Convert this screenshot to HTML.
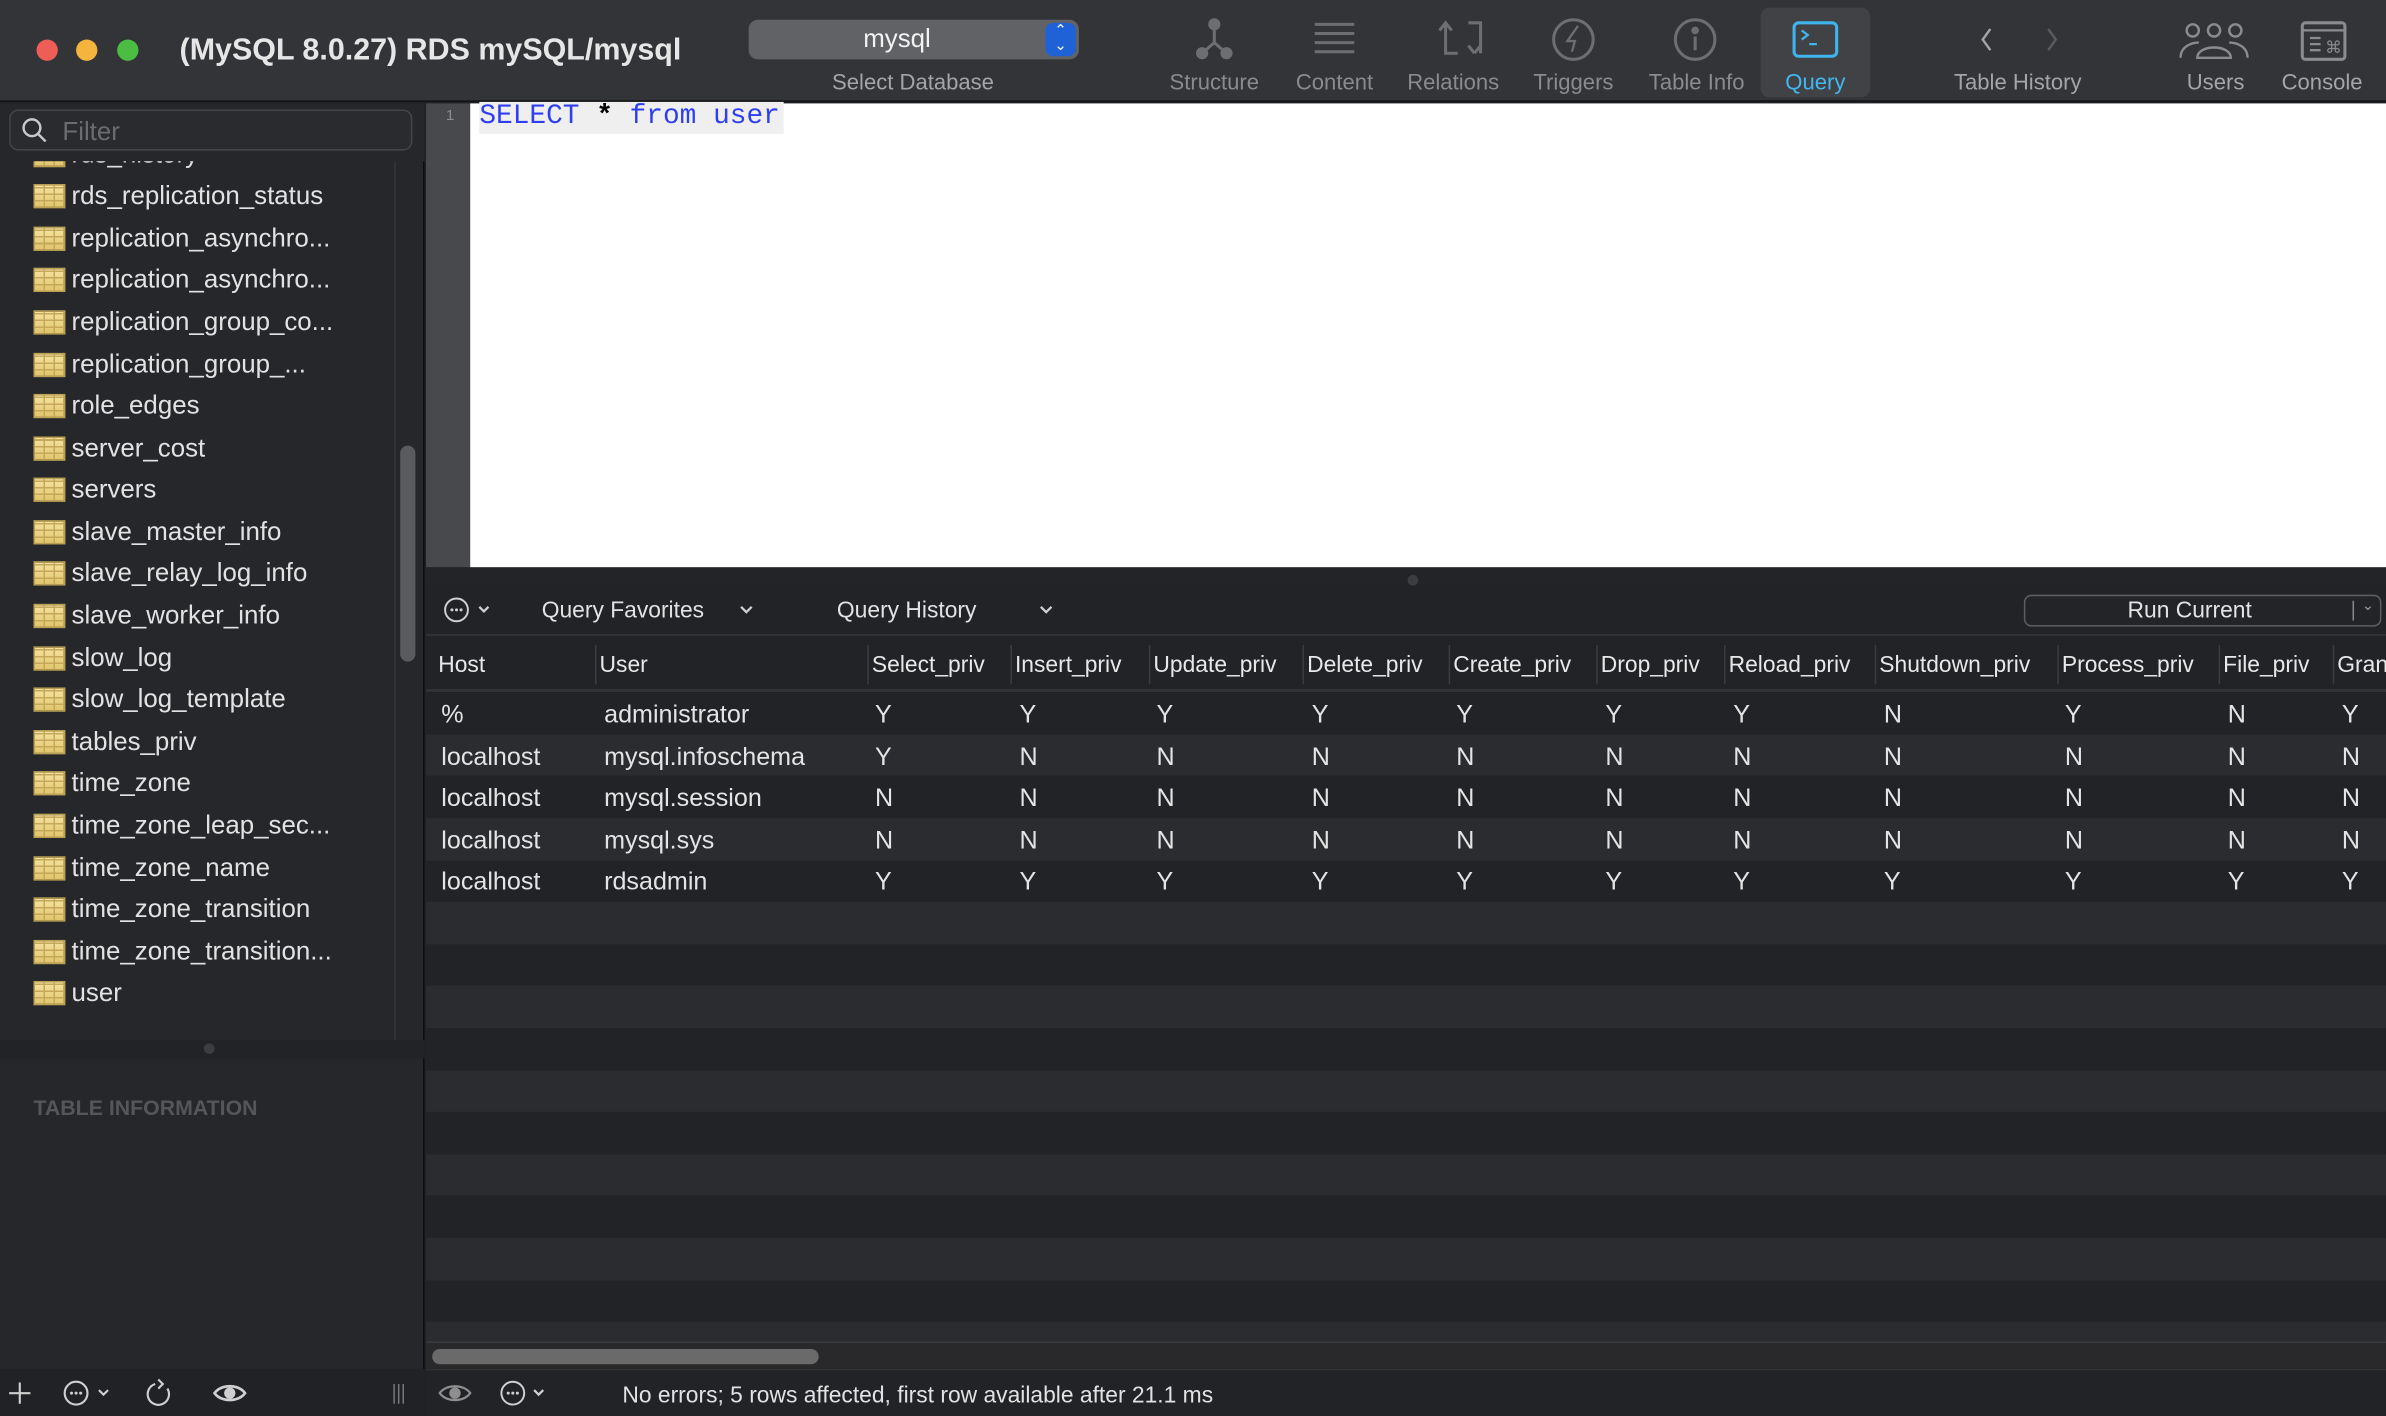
<!DOCTYPE html>
<html><head><meta charset="utf-8"><style>
*{margin:0;padding:0;box-sizing:border-box}
html,body{width:2386px;height:1416px;overflow:hidden;background:#1f2023}
#w{position:absolute;left:0;top:0;width:1568px;height:931px;transform:scale(1.52168,1.5209);transform-origin:0 0;font-family:"Liberation Sans",sans-serif;color:#ddd;background:#212327;overflow:hidden}
.a{position:absolute}
.tb{left:0;top:0;width:1568px;height:67px;background:#333438;border-bottom:1px solid #111}
.tl{width:14px;height:14px;border-radius:7px;top:26px}
.tlab{font-size:14.5px;color:#8a8b8e;text-align:center;top:47px}
.side{left:0;top:68px;width:279px;height:863px;background:#26272b;border-right:1px solid #0c0c0d}
.it{left:22px;height:27px;font-size:17px;color:#e2e2e2;white-space:nowrap;display:flex;align-items:center}
.ic{width:21px;height:16px;margin-right:4px;background:linear-gradient(#f4e3a0,#e0c56c);border:1px solid #b9a052;position:relative}
.ic:before{content:"";position:absolute;inset:0;background:repeating-linear-gradient(0deg,transparent 0 3.4px,#c5a85a 3.4px 4.4px),repeating-linear-gradient(90deg,transparent 0 5.5px,#c5a85a 5.5px 6.5px)}
.hd{font-size:15px;color:#e8e8e8;top:429px}
.sep{width:1px;height:26px;background:#3a3c40;top:424px}
.row{left:280px;width:1288px;height:27.6px}
.c{font-size:16.5px;color:#e4e4e4}
</style></head><body><div id="w">
<div class="a tb"></div>
<div class="a tl" style="left:24px;background:#ee5e57"></div>
<div class="a tl" style="left:50px;background:#f4b43d"></div>
<div class="a tl" style="left:77px;background:#4bbd43"></div>
<div class="a" style="left:118px;top:22px;font-size:20px;font-weight:bold;color:#e6e6e6">(MySQL 8.0.27) RDS mySQL/mysql</div>
<div class="a" style="left:492px;top:13px;width:217px;height:26px;background:#616266;border-radius:6px"></div>
<div class="a" style="left:492px;top:16px;width:195px;text-align:center;font-size:17px;color:#f2f2f2">mysql</div>
<div class="a" style="left:687px;top:15px;width:20px;height:22px;background:#1f62d8;border-radius:5px;color:#fff;font-size:10px;text-align:center;line-height:10px;padding-top:1px">&#8963;<br>&#8964;</div>
<div class="a tlab" style="left:520px;width:160px;color:#a4a5a8">Select Database</div>
<div class="a" style="left:1157px;top:5px;width:72px;height:59px;background:#414246;border-radius:6px"></div>
<svg class="a" style="left:760px;top:8px" width="800" height="34" fill="none" stroke="#6d6e71" stroke-width="2">
<g fill="#6d6e71" stroke="none"><circle cx="38" cy="8" r="4"/><circle cx="30" cy="27" r="4"/><circle cx="46" cy="27" r="4"/></g><path d="M38 8v12l-8 7M38 20l8 7"/>
<path d="M104 8h26M104 14h26M104 20h26M104 26h26"/>
<path d="M186 12l4-5 4 5M190 7v20h8M205 7h8v20M209 27l-4-5M209 27l4-5"/>
<circle cx="274" cy="18" r="13"/><path d="M277 9l-7 10h5l-2 7" stroke-width="1.5"/>
<circle cx="354" cy="18" r="13"/><circle cx="354" cy="12" r="1.5" fill="#6d6e71"/><path d="M354 16v9"/>
<rect x="419" y="7" width="28" height="22" rx="3" stroke="#3fb5f0"/><path d="M424 12l4 3-4 3M429 21h5" stroke="#3fb5f0" stroke-width="1.5"/>
<path d="M548 11l-5 7 5 7" stroke="#a3a4a6" stroke-width="1.6"/><path d="M586 11l5 7-5 7" stroke="#5a5b5e" stroke-width="1.6"/>
<g stroke="#8a8b8e" stroke-width="1.6"><circle cx="681" cy="12" r="4"/><circle cx="695" cy="12" r="4"/><circle cx="709" cy="12" r="4"/><path d="M673 30c0-8 8-10 12-10M717 30c0-8-8-10-12-10M684 30c0-9 22-9 22 0z"/></g>
<rect x="753" y="7" width="28" height="24" rx="2" stroke="#8a8b8e"/><path d="M753 12h28M758 17h7M758 21h7M758 25h7" stroke="#8a8b8e" stroke-width="1.5"/><text x="768" y="27" font-size="11" fill="#8a8b8e" stroke="none" font-family="DejaVu Sans">&#8984;</text>
</svg>
<div class="a tlab" style="left:758px;width:80px">Structure</div>
<div class="a tlab" style="left:844px;width:66px">Content</div>
<div class="a tlab" style="left:920px;width:70px">Relations</div>
<div class="a tlab" style="left:1000px;width:68px">Triggers</div>
<div class="a tlab" style="left:1078px;width:74px">Table Info</div>
<div class="a tlab" style="left:1157px;width:72px;color:#41b6f0">Query</div>
<div class="a tlab" style="left:1270px;width:112px;color:#a4a5a8">Table History</div>
<div class="a tlab" style="left:1426px;width:60px;color:#a4a5a8">Users</div>
<div class="a tlab" style="left:1494px;width:64px;color:#a4a5a8">Console</div>

<div class="a side"></div>
<div class="a" style="left:0;top:68px;width:279px;height:38px;background:#26272b;z-index:2"></div>
<div class="a" style="left:6px;top:72px;width:265px;height:27px;border:1px solid #444549;border-radius:6px;background:#2a2b2f;z-index:3"></div>
<svg class="a" style="left:14px;top:77px;z-index:4" width="18" height="18" fill="none" stroke="#c8c8c8" stroke-width="1.6"><circle cx="7" cy="7" r="5.5"/><path d="M11 11l5 5"/></svg>
<div class="a" style="left:41px;top:77px;font-size:17px;color:#6b6c70;z-index:4">Filter</div>
<div class="a" style="left:259px;top:106px;width:1px;height:578px;background:#36373b"></div>
<div class="a" style="left:263px;top:293px;width:10px;height:142px;background:#5a5b5e;border-radius:5px"></div>
<div class="a it" style="top:88px"><span class="ic"></span>rds_history</div>
<div class="a it" style="top:115px"><span class="ic"></span>rds_replication_status</div>
<div class="a it" style="top:143px"><span class="ic"></span>replication_asynchro...</div>
<div class="a it" style="top:170px"><span class="ic"></span>replication_asynchro...</div>
<div class="a it" style="top:198px"><span class="ic"></span>replication_group_co...</div>
<div class="a it" style="top:226px"><span class="ic"></span>replication_group_...</div>
<div class="a it" style="top:253px"><span class="ic"></span>role_edges</div>
<div class="a it" style="top:281px"><span class="ic"></span>server_cost</div>
<div class="a it" style="top:308px"><span class="ic"></span>servers</div>
<div class="a it" style="top:336px"><span class="ic"></span>slave_master_info</div>
<div class="a it" style="top:363px"><span class="ic"></span>slave_relay_log_info</div>
<div class="a it" style="top:391px"><span class="ic"></span>slave_worker_info</div>
<div class="a it" style="top:419px"><span class="ic"></span>slow_log</div>
<div class="a it" style="top:446px"><span class="ic"></span>slow_log_template</div>
<div class="a it" style="top:474px"><span class="ic"></span>tables_priv</div>
<div class="a it" style="top:501px"><span class="ic"></span>time_zone</div>
<div class="a it" style="top:529px"><span class="ic"></span>time_zone_leap_sec...</div>
<div class="a it" style="top:557px"><span class="ic"></span>time_zone_name</div>
<div class="a it" style="top:584px"><span class="ic"></span>time_zone_transition</div>
<div class="a it" style="top:612px"><span class="ic"></span>time_zone_transition...</div>
<div class="a it" style="top:639px"><span class="ic"></span>user</div>
<div class="a" style="left:0;top:684px;width:279px;height:12px;background:#222327"></div>
<div class="a" style="left:134px;top:686px;width:7px;height:7px;border-radius:4px;background:#3c3d41"></div>
<div class="a" style="left:22px;top:720px;font-size:14px;font-weight:bold;color:#55565a">TABLE INFORMATION</div>
<div class="a" style="left:0;top:900px;width:279px;height:31px;background:#212226"></div>
<svg class="a" style="left:0;top:903px" width="279" height="26" fill="none" stroke="#cfcfcf" stroke-width="1.4">
<path d="M13 6v14M6 13h14"/><circle cx="50" cy="13" r="7.5"/><g fill="#cfcfcf" stroke="none"><circle cx="47" cy="13" r="1"/><circle cx="50" cy="13" r="1"/><circle cx="53" cy="13" r="1"/></g><path d="M65 11l3 3 3-3"/>
<path d="M102 7a7 7 0 1 0 8 3M104 4l3 3-3 3"/>
<path d="M141 13c4-6 16-6 20 0c-4 6-16 6-20 0z" stroke-width="1.8"/><circle cx="151" cy="13" r="3" fill="#cfcfcf"/>
<path d="M259 7v13M262 7v13M265 7v13" stroke="#777" stroke-width="1"/></svg>

<div class="a" style="left:280px;top:68px;width:29px;height:305px;background:#48494c"></div>
<div class="a" style="left:293px;top:71px;font-size:10px;color:#8c8c8c">1</div>
<div class="a" style="left:309px;top:68px;width:1259px;height:305px;background:#fff"></div>
<div class="a" style="left:315px;top:67px;width:200px;height:21px;background:#efefef"></div>
<div class="a" style="left:315px;top:67px;font-family:'Liberation Mono',monospace;font-size:18.3px;color:#2f3ff0;white-space:pre">SELECT <span style="color:#000;font-weight:bold">*</span> from user</div>
<div class="a" style="left:280px;top:373px;width:1288px;height:12px;background:#232428"></div>
<div class="a" style="left:925px;top:378px;width:7px;height:7px;border-radius:4px;background:#3c3d41"></div>
<div class="a" style="left:280px;top:385px;width:1288px;height:33px;background:#212327;border-bottom:1px solid #34363a"></div>
<svg class="a" style="left:288px;top:390px" width="420" height="22" fill="none" stroke="#d0d0d0" stroke-width="1.3">
<circle cx="12" cy="11" r="7.5"/><g fill="#d0d0d0" stroke="none"><circle cx="9" cy="11" r="1"/><circle cx="12" cy="11" r="1"/><circle cx="15" cy="11" r="1"/></g><path d="M27 9l3 3 3-3M199 9l3.5 3.5 3.5-3.5M396 9l3.5 3.5 3.5-3.5" stroke-width="1.5"/></svg>
<div class="a" style="left:356px;top:393px;font-size:15px;color:#e2e2e2">Query Favorites</div>
<div class="a" style="left:550px;top:393px;font-size:15px;color:#e2e2e2">Query History</div>
<div class="a" style="left:1330px;top:391px;width:235px;height:21px;border:1px solid #5c5d61;border-radius:5px;background:#222428"></div>
<div class="a" style="left:1330px;top:393px;width:218px;text-align:center;font-size:15px;color:#e4e4e4">Run Current</div>
<div class="a" style="left:1546px;top:395px;width:1px;height:13px;background:#888"></div>
<div class="a" style="left:1552px;top:393px;font-size:10px;color:#999">&#8964;</div>

<div class="a" style="left:280px;top:419px;width:1288px;height:36px;background:#212327;border-bottom:2px solid #303236"></div>
<div class="a hd" style="left:288px">Host</div>
<div class="a sep" style="left:391px"></div><div class="a hd" style="left:394px">User</div>
<div class="a sep" style="left:570px"></div><div class="a hd" style="left:573px">Select_priv</div>
<div class="a sep" style="left:664px"></div><div class="a hd" style="left:667px">Insert_priv</div>
<div class="a sep" style="left:755px"></div><div class="a hd" style="left:758px">Update_priv</div>
<div class="a sep" style="left:856px"></div><div class="a hd" style="left:859px">Delete_priv</div>
<div class="a sep" style="left:952px"></div><div class="a hd" style="left:955px">Create_priv</div>
<div class="a sep" style="left:1049px"></div><div class="a hd" style="left:1052px">Drop_priv</div>
<div class="a sep" style="left:1133px"></div><div class="a hd" style="left:1136px">Reload_priv</div>
<div class="a sep" style="left:1232px"></div><div class="a hd" style="left:1235px">Shutdown_priv</div>
<div class="a sep" style="left:1352px"></div><div class="a hd" style="left:1355px">Process_priv</div>
<div class="a sep" style="left:1458px"></div><div class="a hd" style="left:1461px">File_priv</div>
<div class="a sep" style="left:1533px"></div><div class="a hd" style="left:1536px">Grant_priv</div>

<div class="a row" style="top:455px;background:#212327"></div>
<div class="a row" style="top:483px;background:#2a2c30"></div>
<div class="a row" style="top:510px;background:#212327"></div>
<div class="a row" style="top:538px;background:#2a2c30"></div>
<div class="a row" style="top:566px;background:#212327"></div>
<div class="a row" style="top:593px;background:#2a2c30"></div>
<div class="a row" style="top:621px;background:#212327"></div>
<div class="a row" style="top:648px;background:#2a2c30"></div>
<div class="a row" style="top:676px;background:#212327"></div>
<div class="a row" style="top:704px;background:#2a2c30"></div>
<div class="a row" style="top:731px;background:#212327"></div>
<div class="a row" style="top:759px;background:#2a2c30"></div>
<div class="a row" style="top:786px;background:#212327"></div>
<div class="a row" style="top:814px;background:#2a2c30"></div>
<div class="a row" style="top:842px;background:#212327"></div>
<div class="a row" style="top:869px;height:13px;background:#2a2c30"></div>
<div class="a" style="left:280px;top:882px;width:1288px;height:18px;background:#29292b;border-top:1px solid #3a3b3e"></div>
<div class="a" style="left:284px;top:887px;width:254px;height:10px;border-radius:5px;background:#6a6a6b"></div>

<div id="cells"></div>
<div class="a" style="left:280px;top:900px;width:1288px;height:31px;background:#212327;border-top:1px solid #333"></div>
<svg class="a" style="left:286px;top:904px" width="90" height="24" fill="none" stroke="#8e8e8e" stroke-width="1.5">
<path d="M3 12c4-6 16-6 20 0c-4 6-16 6-20 0z"/><circle cx="13" cy="12" r="3" fill="#8e8e8e"/>
<circle cx="51" cy="12" r="7.5" stroke="#cfcfcf" stroke-width="1.3"/><g fill="#cfcfcf" stroke="none"><circle cx="48" cy="12" r="1"/><circle cx="51" cy="12" r="1"/><circle cx="54" cy="12" r="1"/></g><path d="M65 10l3 3 3-3" stroke="#cfcfcf"/></svg>
<div class="a" style="left:409px;top:909px;font-size:15px;color:#e2e2e2">No errors; 5 rows affected, first row available after 21.1 ms</div>
<script>
var xs=[290,397,575,670,760,862,957,1055,1139,1238,1357,1464,1539];
var d=[["%","administrator","Y","Y","Y","Y","Y","Y","Y","N","Y","N","Y"],
["localhost","mysql.infoschema","Y","N","N","N","N","N","N","N","N","N","N"],
["localhost","mysql.session","N","N","N","N","N","N","N","N","N","N","N"],
["localhost","mysql.sys","N","N","N","N","N","N","N","N","N","N","N"],
["localhost","rdsadmin","Y","Y","Y","Y","Y","Y","Y","Y","Y","Y","Y"]];
var h="";d.forEach(function(r,i){r.forEach(function(v,j){h+='<div class="a c" style="left:'+xs[j]+'px;top:'+(461+i*27.6)+'px">'+v+'</div>'})});
document.getElementById("cells").innerHTML=h;
</script>
</div></body></html>
